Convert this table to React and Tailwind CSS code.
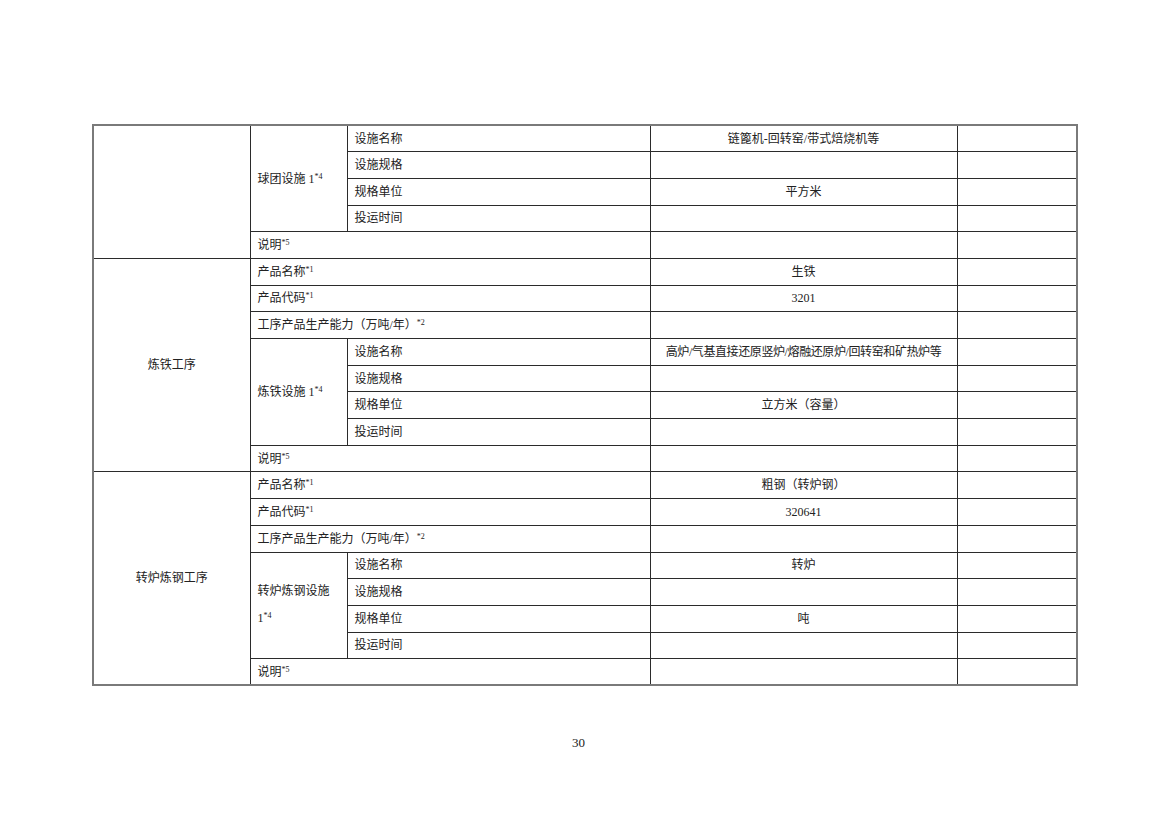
import React from "react";

const font = { fontFamily: '"Liberation Serif", "Noto Sans CJK SC", serif' };

function Sup({ children }) {
  return <sup className="text-[8px] -top-[4px]">{children}</sup>;
}

const td = "border border-[#2b2b2b] px-[7px] align-middle";
const tdc = "border border-[#2b2b2b] px-[7px] align-middle text-center";

function FacilityRows({ label, name, unit, nameClass = "" }) {
  return (
    <>
      <tr className="h-[26.7px]">
        {label}
        <td className={td}>设施名称</td>
        <td className={tdc + " " + nameClass}>{name}</td>
        <td className={td}></td>
      </tr>
      <tr className="h-[26.7px]">
        <td className={td}>设施规格</td>
        <td className={tdc}></td>
        <td className={td}></td>
      </tr>
      <tr className="h-[26.7px]">
        <td className={td}>规格单位</td>
        <td className={tdc}>{unit}</td>
        <td className={td}></td>
      </tr>
      <tr className="h-[26.7px]">
        <td className={td}>投运时间</td>
        <td className={tdc}></td>
        <td className={td}></td>
      </tr>
    </>
  );
}

function NoteRow() {
  return (
    <tr className="h-[26.7px]">
      <td className={td} colSpan={2}>
        说明<Sup>*5</Sup>
      </td>
      <td className={tdc}></td>
      <td className={td}></td>
    </tr>
  );
}

function ProductRows({ first, product, code }) {
  return (
    <>
      <tr className="h-[26.7px]">
        {first}
        <td className={td} colSpan={2}>
          产品名称<Sup>*1</Sup>
        </td>
        <td className={tdc}>{product}</td>
        <td className={td}></td>
      </tr>
      <tr className="h-[26.7px]">
        <td className={td} colSpan={2}>
          产品代码<Sup>*1</Sup>
        </td>
        <td className={tdc}>{code}</td>
        <td className={td}></td>
      </tr>
      <tr className="h-[26.7px]">
        <td className={td} colSpan={2}>
          工序产品生产能力（万吨/年）<Sup>*2</Sup>
        </td>
        <td className={tdc}></td>
        <td className={td}></td>
      </tr>
    </>
  );
}

export default function App() {
  return (
    <div className="w-[1169px] h-[826px] bg-white text-[#222]" style={font}>
      <div className="pt-[124px] pl-[92px]">
        <table className="table-fixed border-collapse border-2 border-[#7a7a7a] w-[984px] text-[12px] leading-[16px]">
          <colgroup>
            <col className="w-[157px]" />
            <col className="w-[97px]" />
            <col className="w-[303px]" />
            <col className="w-[307px]" />
            <col className="w-[120px]" />
          </colgroup>
          <tbody>
            <FacilityRows
              label={
                <>
                  <td className={tdc} rowSpan={5}></td>
                  <td className={td} rowSpan={4}>
                    球团设施 1<Sup>*4</Sup>
                  </td>
                </>
              }
              name="链篦机-回转窑/带式焙烧机等"
              unit="平方米"
            />
            <NoteRow />

            <ProductRows
              first={
                <td className={tdc} rowSpan={8}>
                  炼铁工序
                </td>
              }
              product="生铁"
              code="3201"
            />
            <FacilityRows
              label={
                <td className={td} rowSpan={4}>
                  炼铁设施 1<Sup>*4</Sup>
                </td>
              }
              name="高炉/气基直接还原竖炉/熔融还原炉/回转窑和矿热炉等"
              nameClass="tracking-[-0.4px]"
              unit="立方米（容量）"
            />
            <NoteRow />

            <ProductRows
              first={
                <td className={tdc} rowSpan={8}>
                  转炉炼钢工序
                </td>
              }
              product="粗钢（转炉钢）"
              code="320641"
            />
            <FacilityRows
              label={
                <td className={td + " leading-[27px]"} rowSpan={4}>
                  转炉炼钢设施
                  <br />1<Sup>*4</Sup>
                </td>
              }
              name="转炉"
              unit="吨"
            />
            <NoteRow />
          </tbody>
        </table>
      </div>
      <div className="pl-[572px] pt-[49px] text-[13px] leading-[15px]">30</div>
    </div>
  );
}
